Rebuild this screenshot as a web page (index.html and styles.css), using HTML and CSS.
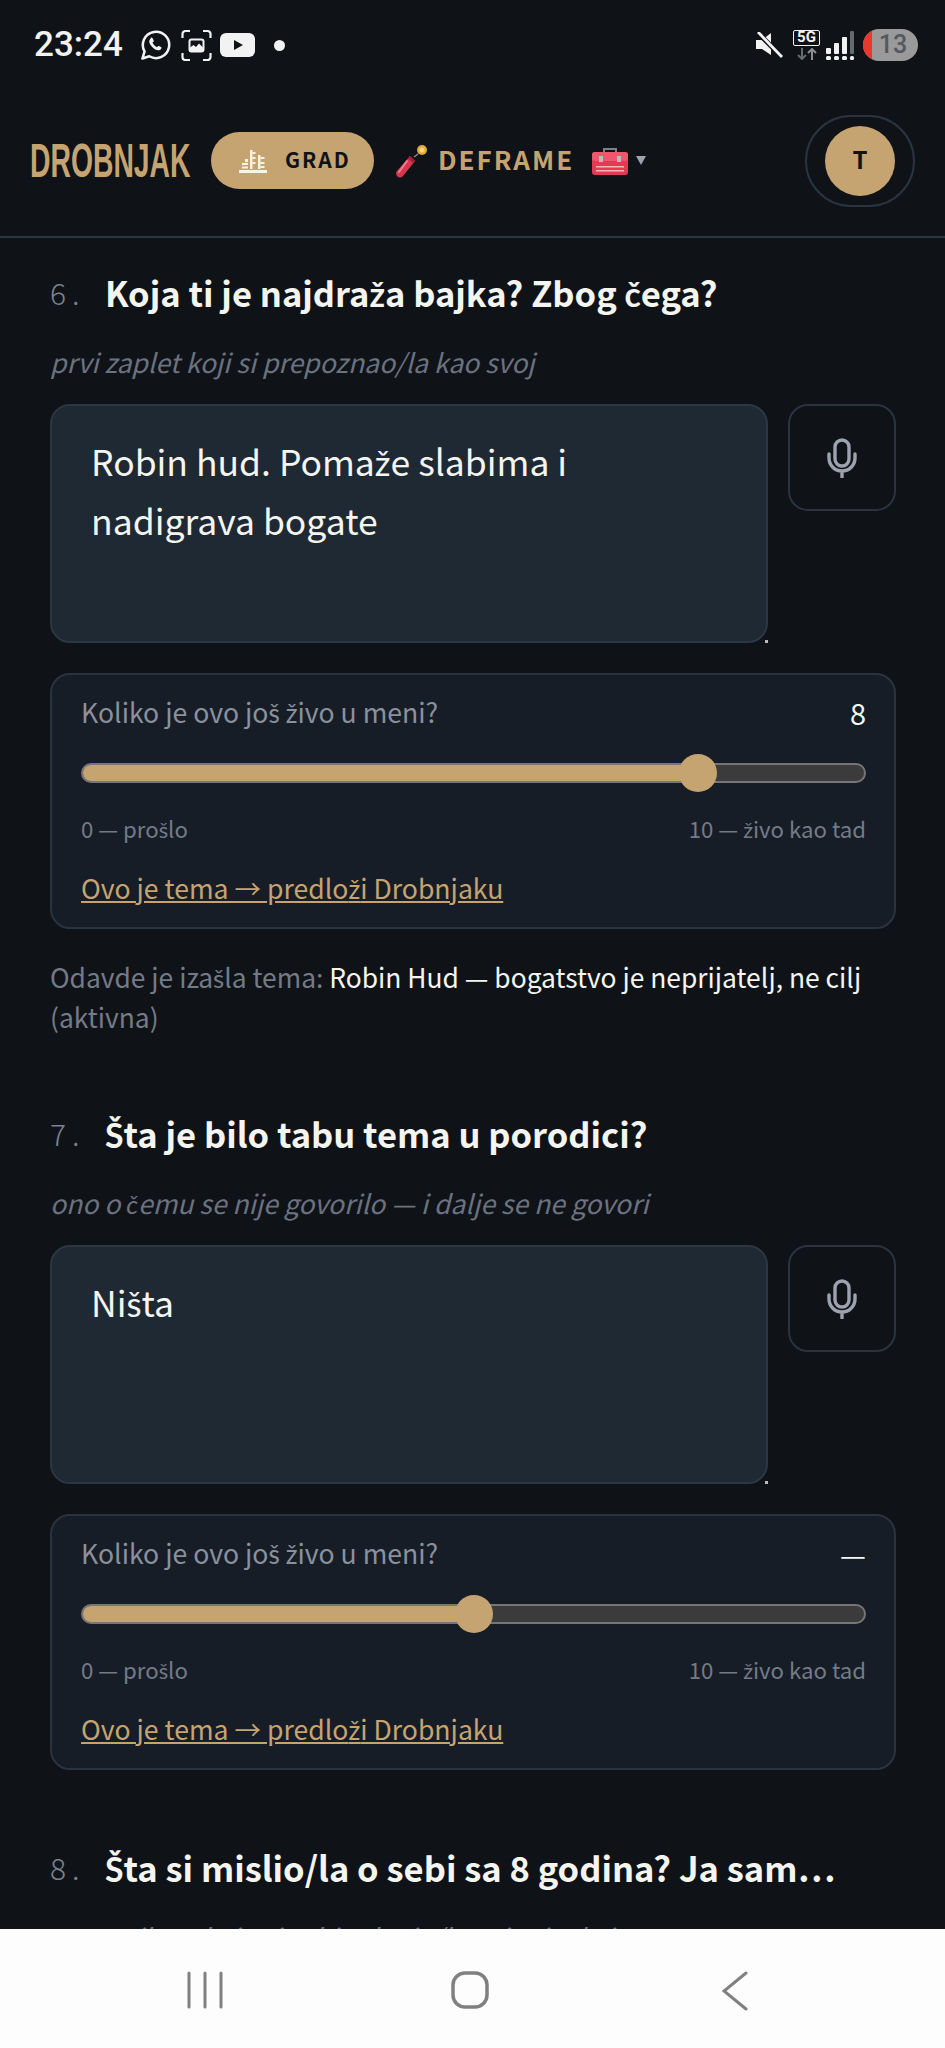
FILE: index.html
```html
<!DOCTYPE html>
<html lang="sr">

<head>
  <meta charset="UTF-8">
  <meta name="viewport" content="width=device-width, initial-scale=1.0">
  <title>Drobnjak</title>
  <link rel="stylesheet" href="styles.css">
</head>

<body>
  <div class="phone">
    <div class="status-bar">
      <div class="status-left">
        <span class="status-time">23:24</span>
        <svg class="ico-whatsapp" viewBox="0 0 32 32" fill="none" stroke="#f2f2f2" stroke-width="2.6">
          <path d="M2.5 30 l2.2-7.4 A13.6 13.6 0 1 1 9.6 27.6 Z" stroke-linejoin="round"/>
          <path d="M11 9.5 c-2 1.2-2 4 .5 7.2 c2.8 3.6 6 5.2 8.4 4.6 c1.6-.5 2.6-2 2.2-3 l-3-1.6 l-1.6 1.6 c-2-.8-3.8-2.8-4.6-4.8 l1.5-1.5 l-1.3-3 c-.6-.5-1.4-.8-2.1-.5 z" fill="#f2f2f2" stroke="none"/>
        </svg>
        <svg class="ico-shot" viewBox="0 0 31 31" fill="none" stroke="#f2f2f2" stroke-width="2.2">
          <path d="M1.5 8 V4 a3 3 0 0 1 3-3 H9 M22 1 h4.500 a3 3 0 0 1 3 3 V8 M29.500 23 v4 a3 3 0 0 1-3 3 H22 M9 30 H4.500 a3 3 0 0 1-3-3 V23"/>
          <rect x="8.500" y="9.500" width="14" height="12" rx="2" stroke-width="2"/>
          <path d="M9 21 V17.500 l3.500-2.500 l2.500 2 l3-3.500 l4.500 4.500 V21 Z" fill="#f2f2f2" stroke="none"/>
        </svg>
        <svg class="ico-yt" viewBox="0 0 35 24">
          <rect width="35" height="24" rx="6" fill="#f2f2f2"/>
          <path d="M14 7 L23 12 L14 17 Z" fill="#0f1318"/>
        </svg>
        <span class="status-dot"></span>
      </div>
      <div class="status-right">
        <svg class="ico-mute" viewBox="0 0 28 26">
          <path d="M1 8 H7 L16 1 V23 L7 17 H1 Z" fill="#f2f2f2"/>
          <path d="M2 0 L27 25" stroke="#0f1318" stroke-width="5"/>
          <path d="M3 0 L27 25" stroke="#f2f2f2" stroke-width="2.800"/>
        </svg>
        <div class="net">
          <span class="net-label">5G</span>
          <svg class="ico-arrows" viewBox="0 0 20 12" fill="none" stroke-width="2">
            <path d="M5 0 V11 M1 7 L5 11 L9 7" stroke="#666b70"/>
            <path d="M15 12 V1 M11 5 L15 1 L19 5" stroke="#8b8f93"/>
          </svg>
        </div>
        <svg class="ico-signal" viewBox="0 0 28 29">
          <g fill="#f2f2f2">
            <rect x="0" y="17" width="5" height="6" rx="1"/>
            <rect x="8" y="12" width="5" height="11" rx="1"/>
            <rect x="16" y="6" width="5" height="17" rx="1"/>
            <rect x="0" y="25" width="5" height="4" rx="1.500"/>
            <rect x="8" y="25" width="5" height="4" rx="1.500"/>
            <rect x="16" y="25" width="5" height="4" rx="1.500"/>
            <rect x="24" y="25" width="4" height="4" rx="1.500"/>
          </g>
          <rect x="24" y="0" width="4" height="23" rx="1" fill="#66696d"/>
        </svg>
        <div class="battery"><span class="battery-low"></span><span class="battery-num">13</span></div>
      </div>
    </div>

    <header class="top-nav">
      <span class="brand"><span class="brand-text">DROBNJAK</span></span>
      <button type="button" class="pill-grad">
        <svg class="ico-city" viewBox="0 0 28 24" fill="#fbf3e2">
          <rect x="0" y="21" width="28" height="3"/>
          <rect x="3" y="14" width="6" height="2"/>
          <rect x="3" y="17.500" width="6" height="2"/>
          <rect x="11" y="1" width="2.500" height="19"/>
          <rect x="13.500" y="3" width="3" height="2"/>
          <rect x="13.500" y="8" width="3" height="2"/>
          <rect x="13.500" y="13" width="3" height="2"/>
          <rect x="19" y="6" width="2.500" height="14"/>
          <rect x="21.500" y="8" width="4" height="2"/>
          <rect x="21.500" y="13" width="4" height="2"/>
          <rect x="21.500" y="17" width="4" height="2"/>
          <rect x="6" y="10" width="3" height="3"/>
        </svg>
        <span class="grad-text">GRAD</span>
      </button>
      <div class="nav-deframe">
        <svg class="ico-cracker" viewBox="0 0 34 34">
          <circle cx="28" cy="6" r="5" fill="#e2a93a"/>
          <circle cx="28" cy="6" r="2.500" fill="#f7d774"/>
          <path d="M24 10 L20 13" stroke="#8a8a8a" stroke-width="1.500"/>
          <path d="M16 12 L21 17 L9 32 Q6 35 3 32 Q1 29 3 27 Z" fill="#d8354f"/>
          <path d="M16 12 L21 17 L19 19 L14 14.500 Z" fill="#a51f38"/>
          <path d="M13 17 L5 28" stroke="#f07f8e" stroke-width="2" stroke-linecap="round"/>
        </svg>
        <span class="deframe-text">DEFRAME</span>
      </div>
      <div class="nav-tools">
        <svg class="ico-toolbox" viewBox="0 0 36 28">
          <path d="M12 5 V2 H24 V5" fill="none" stroke="#7d8085" stroke-width="2"/>
          <rect x="0" y="5" width="36" height="23" rx="3" fill="#e23b54"/>
          <rect x="0" y="5" width="36" height="9" rx="3" fill="#f0566c"/>
          <rect x="7" y="9" width="4" height="6" fill="#b9bcc0"/>
          <rect x="25" y="9" width="4" height="6" fill="#b9bcc0"/>
          <rect x="4" y="19" width="28" height="1.500" fill="#f9b3bd"/>
          <rect x="4" y="23" width="28" height="1.500" fill="#f9b3bd"/>
        </svg>
        <span class="caret"></span>
      </div>
      <div class="avatar-ring"><span class="avatar">T</span></div>
    </header>

    <main class="content">
      <section class="question">
        <h2 class="q-title"><span class="q-num">6.</span><span>Koja ti je najdra<span class="lat">ž</span>a bajka? Zbog <span class="lat">č</span>ega?</span></h2>
        <p class="q-hint">prvi zaplet koji si prepoznao/la kao svoj</p>
        <div class="answer-row">
          <div class="answer">Robin hud. Poma<span class="lat">ž</span>e slabima i<br>nadigrava bogate<span class="grip"></span></div>
          <button type="button" class="mic-btn">
            <svg class="ico-mic" viewBox="0 0 30 40" fill="none" stroke="#9ca3af" stroke-width="3.400" stroke-linecap="round">
              <rect x="8" y="2" width="14" height="26" rx="7"/>
              <path d="M2 16 V20 A13 13 0 0 0 28 20 V16 M15 33 V39"/>
            </svg>
          </button>
        </div>
        <div class="rating-card">
          <div class="rating-head"><span>Koliko je ovo jo<span class="lat">š</span> <span class="lat">ž</span>ivo u meni?</span><span class="rating-value">8</span></div>
          <div class="slider" style="--v: 0.8">
            <div class="slider-fill"></div>
            <span class="slider-thumb"></span>
          </div>
          <div class="rating-scale"><span>0 — pro<span class="lat">š</span>lo</span><span>10 — <span class="lat">ž</span>ivo kao tad</span></div>
          <a class="theme-link" href="#">Ovo je tema → predlo<span class="lat">ž</span>i Drobnjaku</a>
        </div>
        <p class="q-note">Odavde je iza<span class="lat">š</span>la tema: <span class="q-note-strong">Robin Hud — bogatstvo je neprijatelj, ne cilj</span> (aktivna)</p>
      </section>

      <section class="question">
        <h2 class="q-title"><span class="q-num">7.</span><span><span class="lat">Š</span>ta je bilo tabu tema u porodici?</span></h2>
        <p class="q-hint">ono o <span class="lat">č</span>emu se nije govorilo — i dalje se ne govori</p>
        <div class="answer-row">
          <div class="answer">Ni<span class="lat">š</span>ta<span class="grip"></span></div>
          <button type="button" class="mic-btn">
            <svg class="ico-mic" viewBox="0 0 30 40" fill="none" stroke="#9ca3af" stroke-width="3.400" stroke-linecap="round">
              <rect x="8" y="2" width="14" height="26" rx="7"/>
              <path d="M2 16 V20 A13 13 0 0 0 28 20 V16 M15 33 V39"/>
            </svg>
          </button>
        </div>
        <div class="rating-card">
          <div class="rating-head"><span>Koliko je ovo jo<span class="lat">š</span> <span class="lat">ž</span>ivo u meni?</span><span class="rating-value">—</span></div>
          <div class="slider" style="--v: 0.5">
            <div class="slider-fill"></div>
            <span class="slider-thumb"></span>
          </div>
          <div class="rating-scale"><span>0 — pro<span class="lat">š</span>lo</span><span>10 — <span class="lat">ž</span>ivo kao tad</span></div>
          <a class="theme-link" href="#">Ovo je tema → predlo<span class="lat">ž</span>i Drobnjaku</a>
        </div>
      </section>

      <section class="question">
        <h2 class="q-title"><span class="q-num">8.</span><span><span class="lat">Š</span>ta si mislio/la o sebi sa 8 godina? Ja sam…</span></h2>
        <p class="q-hint">prva etiketa koju si sebi zalepio/la — jo<span class="lat">š</span> je dr<span class="lat">ž</span>i</p>
      </section>
    </main>

    <nav class="nav-bar">
      <svg class="ico-recents" viewBox="0 0 36 38" stroke="#808080" stroke-width="3" stroke-linecap="round">
        <path d="M2 2 V36 M18 2 V36 M34 2 V36"/>
      </svg>
      <svg class="ico-home" viewBox="0 0 38 38" fill="none" stroke="#808080" stroke-width="3.500">
        <rect x="2" y="2" width="34" height="34" rx="12"/>
      </svg>
      <svg class="ico-back" viewBox="0 0 26 40" fill="none" stroke="#808080" stroke-width="3" stroke-linecap="round">
        <path d="M24 2 L2 20 L24 38"/>
      </svg>
    </nav>
  </div>
</body>

</html>
```

FILE: styles.css
```css
* {
  box-sizing: border-box;
}

body {
  margin: 0;
  background: #0f1318;
  color: #f5f5f0;
  font-family: "Noto Sans CJK SC", "Noto Sans", sans-serif;
}

/* the CJK font has no s/z/c with caron */
.lat {
  font-family: Lato, "Noto Sans", sans-serif;
  font-size: 0.98em;
  line-height: 0;
}

.phone {
  width: 945px;
  height: 2048px;
  display: flex;
  flex-direction: column;
  overflow: hidden;
}

/* status bar */
.status-bar {
  height: 90px;
  flex-shrink: 0;
  display: flex;
  justify-content: space-between;
  align-items: flex-start;
  padding: 29px 27px 0 34px;
}

.status-left,
.status-right {
  display: flex;
  align-items: center;
}

.status-time {
  font-family: Roboto, sans-serif;
  font-weight: 500;
  font-size: 35px;
  line-height: 32px;
  color: #f2f2f2;
  width: 106px;
}

.ico-whatsapp { width: 31px; height: 32px; }
.ico-shot { width: 31px; height: 31px; margin-left: 10px; }
.ico-yt { width: 35px; height: 24px; margin-left: 8px; }

.status-dot {
  width: 11px;
  height: 11px;
  border-radius: 50%;
  background: #f2f2f2;
  margin-left: 19px;
}

.ico-mute { width: 28px; height: 26px; }

.net {
  display: flex;
  flex-direction: column;
  align-items: center;
  width: 27px;
  margin-left: 10px;
}

.net-label {
  width: 27px;
  height: 16px;
  border: 1.5px solid #f2f2f2;
  border-radius: 2px;
  font-family: Roboto, sans-serif;
  font-size: 15px;
  font-weight: 700;
  line-height: 13px;
  text-align: center;
  color: #f2f2f2;
}

.ico-arrows { width: 20px; height: 12px; margin-top: 2px; }
.ico-signal { width: 28px; height: 29px; margin-left: 6px; }

.battery {
  position: relative;
  width: 55px;
  height: 32px;
  margin-left: 9px;
  border-radius: 16px;
  background: #9a9a9a;
  overflow: hidden;
  text-align: center;
}

.battery-low {
  position: absolute;
  left: 0;
  top: 0;
  width: 9px;
  height: 32px;
  background: #e8392c;
}

.battery-num {
  position: relative;
  font-family: Roboto, sans-serif;
  font-size: 25px;
  font-weight: 500;
  line-height: 32px;
  color: #55585c;
  padding-left: 5px;
}

/* top nav */
.top-nav {
  height: 148px;
  flex-shrink: 0;
  display: flex;
  align-items: center;
  padding: 0 30px 5px 30px;
  border-bottom: 2px solid #2a3744;
}

.brand {
  width: 181px;
  flex-shrink: 0;
  color: #c6a472;
}

.brand-text {
  display: inline-block;
  font-family: "Liberation Sans", sans-serif;
  font-size: 48px;
  font-weight: 700;
  line-height: 50px;
  white-space: nowrap;
  transform: scaleX(0.59);
  transform-origin: left center;
}

.pill-grad {
  width: 163px;
  height: 57px;
  flex-shrink: 0;
  display: flex;
  align-items: center;
  padding: 0 0 0 28px;
  border: none;
  border-radius: 29px;
  background: #c6a472;
  color: #0f1318;
  font-family: inherit;
  font-size: 21px;
  font-weight: 700;
  letter-spacing: 2px;
}

.ico-city { width: 28px; height: 24px; margin-right: 18px; }

.grad-text {
  margin-bottom: 4px;
}

.nav-deframe {
  display: flex;
  align-items: center;
  margin-left: 20px;
}

.ico-cracker { width: 34px; height: 34px; }

.deframe-text {
  margin-left: 10px;
  margin-bottom: 4px;
  font-size: 26px;
  font-weight: 700;
  letter-spacing: 2px;
  color: #c6a472;
}

.nav-tools {
  display: flex;
  align-items: center;
  margin-left: 18px;
}

.ico-toolbox { width: 36px; height: 28px; }

.caret {
  width: 0;
  height: 0;
  margin-left: 8px;
  border-left: 5px solid transparent;
  border-right: 5px solid transparent;
  border-top: 9px solid #9ca3af;
}

.avatar-ring {
  width: 110px;
  height: 92px;
  margin-left: auto;
  display: flex;
  align-items: center;
  justify-content: center;
  border: 2px solid #2a3340;
  border-radius: 46px;
}

.avatar {
  width: 70px;
  height: 70px;
  border-radius: 50%;
  background: #c6a472;
  color: #0f1318;
  font-size: 24px;
  font-weight: 700;
  line-height: 66px;
  text-align: center;
}

/* questions */
.content {
  flex: 1;
  min-height: 0;
  overflow: hidden;
  padding: 29px 49px 0 50px;
}

.question {
  padding-bottom: 72px;
}

.q-title {
  display: flex;
  margin: 0;
  font-size: 34.5px;
  font-weight: 700;
  line-height: 50px;
  white-space: nowrap;
}

.q-num {
  width: 55px;
  font-size: 30px;
  font-weight: 300;
  letter-spacing: 6px;
  color: #7b8390;
}

.q-hint {
  margin: 25px 0 0;
  font-size: 26.5px;
  font-style: italic;
  font-weight: 400;
  line-height: 40px;
  color: #6b7280;
}

.answer-row {
  display: flex;
  align-items: flex-start;
  gap: 20px;
  margin-top: 22px;
}

.answer {
  position: relative;
  width: 718px;
  height: 239px;
  padding: 25px 39px;
  background: #1f2933;
  border: 2px solid #2a3744;
  border-radius: 20px;
  font-size: 35.5px;
  font-weight: 400;
  line-height: 59px;
}

.grip {
  position: absolute;
  right: -2px;
  bottom: -2px;
  width: 3px;
  height: 3px;
  background: #b8bcc2;
}

.mic-btn {
  width: 108px;
  height: 107px;
  display: flex;
  align-items: center;
  justify-content: center;
  padding: 0;
  background: transparent;
  border: 2px solid #2a3340;
  border-radius: 20px;
}

.ico-mic { width: 30px; height: 40px; }

.rating-card {
  margin-top: 30px;
  height: 256px;
  padding: 19px 28px 0 29px;
  background: #161d27;
  border: 2px solid #2a3340;
  border-radius: 20px;
}

.rating-head {
  display: flex;
  justify-content: space-between;
  font-size: 26.6px;
  font-weight: 400;
  line-height: 36px;
  color: #8a919c;
}

.rating-value {
  font-size: 29px;
  color: #f5f5f0;
}

.slider {
  position: relative;
  height: 20px;
  margin-top: 33px;
  background: #3b3b3b;
  border: 2px solid #767676;
  border-radius: 10px;
}

.slider-fill {
  width: calc(17px + var(--v) * (100% - 34px));
  height: 100%;
  background: #c6a472;
  border-radius: 8px 0 0 8px;
}

.slider-thumb {
  position: absolute;
  top: -11px;
  left: calc(17px + var(--v) * (100% - 34px));
  width: 38px;
  height: 38px;
  margin-left: -19px;
  border-radius: 50%;
  background: #c6a472;
}

.rating-scale {
  display: flex;
  justify-content: space-between;
  margin-top: 30px;
  font-size: 22.2px;
  font-weight: 400;
  line-height: 30px;
  color: #747b87;
}

.theme-link {
  display: block;
  margin-top: 27px;
  font-size: 26.6px;
  font-weight: 400;
  line-height: 36px;
  color: #c6a472;
}

.q-note {
  margin: 28px 0 -1px;
  font-size: 26.4px;
  font-weight: 400;
  line-height: 40px;
  color: #747b87;
}

.q-note-strong {
  color: #f5f5f0;
}

/* android nav */
.nav-bar {
  height: 119px;
  flex-shrink: 0;
  position: relative;
  display: flex;
  background: #fdfdfd;
  padding-top: 42px;
}

.ico-recents { width: 36px; height: 38px; margin-left: 187px; }
.ico-home { width: 38px; height: 38px; margin-left: 228px; }
.ico-back { width: 26px; height: 40px; margin-left: 233px; }
```
